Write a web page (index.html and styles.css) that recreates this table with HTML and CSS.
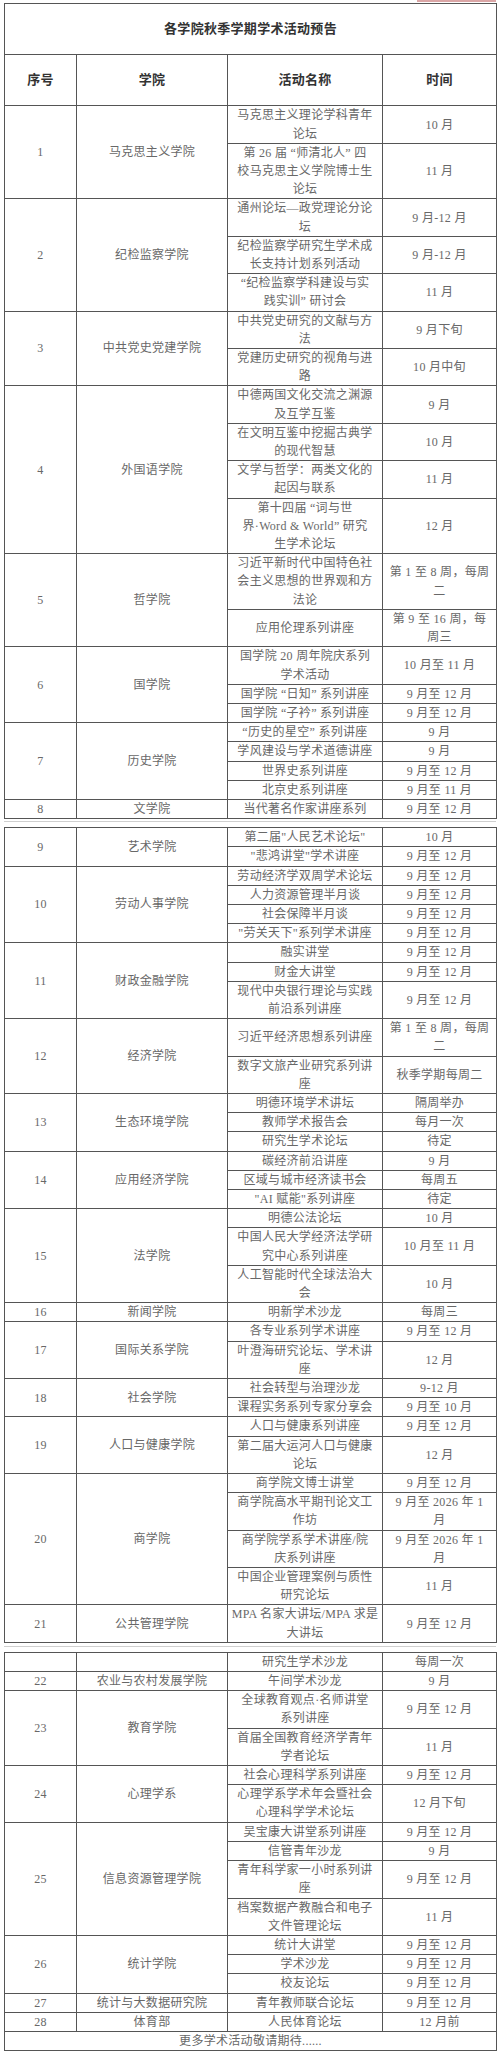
FILE: index.html
```html
<!DOCTYPE html>
<html lang="zh-CN">
<head>
<meta charset="utf-8">
<title>各学院秋季学期学术活动预告</title>
<link rel="stylesheet" href="styles.css">
</head>
<body>
<div class="page">
  <div class="topmark"></div>

  <table class="seg seg1">
    <colgroup><col class="c1"><col class="c2"><col class="c3"><col class="c4"></colgroup>
    <tr class="title"><td colspan="4">各学院秋季学期学术活动预告</td></tr>
    <tr class="head"><td>序号</td><td>学院</td><td>活动名称</td><td>时间</td></tr>

    <tr><td rowspan="2">1</td><td rowspan="2">马克思主义学院</td><td>马克思主义理论学科青年<br>论坛</td><td>10 月</td></tr>
    <tr><td>第 26 届 “师清北人” 四<br>校马克思主义学院博士生<br>论坛</td><td>11 月</td></tr>

    <tr><td rowspan="3">2</td><td rowspan="3">纪检监察学院</td><td>通州论坛—政党理论分论<br>坛</td><td>9 月-12 月</td></tr>
    <tr><td>纪检监察学研究生学术成<br>长支持计划系列活动</td><td>9 月-12 月</td></tr>
    <tr><td>“纪检监察学科建设与实<br>践实训” 研讨会</td><td>11 月</td></tr>

    <tr><td rowspan="2">3</td><td rowspan="2">中共党史党建学院</td><td>中共党史研究的文献与方<br>法</td><td>9 月下旬</td></tr>
    <tr><td>党建历史研究的视角与进<br>路</td><td>10 月中旬</td></tr>

    <tr><td rowspan="4">4</td><td rowspan="4">外国语学院</td><td>中德两国文化交流之渊源<br>及互学互鉴</td><td>9 月</td></tr>
    <tr><td>在文明互鉴中挖掘古典学<br>的现代智慧</td><td>10 月</td></tr>
    <tr><td>文学与哲学：两类文化的<br>起因与联系</td><td>11 月</td></tr>
    <tr><td>第十四届 “词与世<br>界·Word &amp; World” 研究<br>生学术论坛</td><td>12 月</td></tr>

    <tr><td rowspan="2">5</td><td rowspan="2">哲学院</td><td>习近平新时代中国特色社<br>会主义思想的世界观和方<br>法论</td><td>第 1 至 8 周，每周<br>二</td></tr>
    <tr><td>应用伦理系列讲座</td><td>第 9 至 16 周，每<br>周三</td></tr>

    <tr><td rowspan="3">6</td><td rowspan="3">国学院</td><td>国学院 20 周年院庆系列<br>学术活动</td><td>10 月至 11 月</td></tr>
    <tr><td>国学院 “日知” 系列讲座</td><td>9 月至 12 月</td></tr>
    <tr><td>国学院 “子衿” 系列讲座</td><td>9 月至 12 月</td></tr>

    <tr><td rowspan="4">7</td><td rowspan="4">历史学院</td><td>“历史的星空” 系列讲座</td><td>9 月</td></tr>
    <tr><td>学风建设与学术道德讲座</td><td>9 月</td></tr>
    <tr><td>世界史系列讲座</td><td>9 月至 12 月</td></tr>
    <tr><td>北京史系列讲座</td><td>9 月至 11 月</td></tr>

    <tr><td>8</td><td>文学院</td><td>当代著名作家讲座系列</td><td>9 月至 12 月</td></tr>
  </table>

  <div class="gap"><div class="gap-line"></div></div>

  <table class="seg seg2">
    <colgroup><col class="c1"><col class="c2"><col class="c3"><col class="c4"></colgroup>
    <tr><td rowspan="2">9</td><td rowspan="2">艺术学院</td><td>第二届"人民艺术论坛"</td><td>10 月</td></tr>
    <tr><td>"悲鸿讲堂"学术讲座</td><td>9 月至 12 月</td></tr>

    <tr><td rowspan="4">10</td><td rowspan="4">劳动人事学院</td><td>劳动经济学双周学术论坛</td><td>9 月至 12 月</td></tr>
    <tr><td>人力资源管理半月谈</td><td>9 月至 12 月</td></tr>
    <tr><td>社会保障半月谈</td><td>9 月至 12 月</td></tr>
    <tr><td>"劳关天下"系列学术讲座</td><td>9 月至 12 月</td></tr>

    <tr><td rowspan="3">11</td><td rowspan="3">财政金融学院</td><td>融实讲堂</td><td>9 月至 12 月</td></tr>
    <tr><td>财金大讲堂</td><td>9 月至 12 月</td></tr>
    <tr><td>现代中央银行理论与实践<br>前沿系列讲座</td><td>9 月至 12 月</td></tr>

    <tr><td rowspan="2">12</td><td rowspan="2">经济学院</td><td>习近平经济思想系列讲座</td><td>第 1 至 8 周，每周<br>二</td></tr>
    <tr><td>数字文旅产业研究系列讲<br>座</td><td>秋季学期每周二</td></tr>

    <tr><td rowspan="3">13</td><td rowspan="3">生态环境学院</td><td>明德环境学术讲坛</td><td>隔周举办</td></tr>
    <tr><td>教师学术报告会</td><td>每月一次</td></tr>
    <tr><td>研究生学术论坛</td><td>待定</td></tr>

    <tr><td rowspan="3">14</td><td rowspan="3">应用经济学院</td><td>碳经济前沿讲座</td><td>9 月</td></tr>
    <tr><td>区域与城市经济读书会</td><td>每周五</td></tr>
    <tr><td>"AI 赋能"系列讲座</td><td>待定</td></tr>

    <tr><td rowspan="3">15</td><td rowspan="3">法学院</td><td>明德公法论坛</td><td>10 月</td></tr>
    <tr><td>中国人民大学经济法学研<br>究中心系列讲座</td><td>10 月至 11 月</td></tr>
    <tr><td>人工智能时代全球法治大<br>会</td><td>10 月</td></tr>

    <tr><td>16</td><td>新闻学院</td><td>明新学术沙龙</td><td>每周三</td></tr>

    <tr><td rowspan="2">17</td><td rowspan="2">国际关系学院</td><td>各专业系列学术讲座</td><td>9 月至 12 月</td></tr>
    <tr><td>叶澄海研究论坛、学术讲<br>座</td><td>12 月</td></tr>

    <tr><td rowspan="2">18</td><td rowspan="2">社会学院</td><td>社会转型与治理沙龙</td><td>9-12 月</td></tr>
    <tr><td>课程实务系列专家分享会</td><td>9 月至 10 月</td></tr>

    <tr><td rowspan="2">19</td><td rowspan="2">人口与健康学院</td><td>人口与健康系列讲座</td><td>9 月至 12 月</td></tr>
    <tr><td>第二届大运河人口与健康<br>论坛</td><td>12 月</td></tr>

    <tr><td rowspan="4">20</td><td rowspan="4">商学院</td><td>商学院文博士讲堂</td><td>9 月至 12 月</td></tr>
    <tr><td>商学院高水平期刊论文工<br>作坊</td><td>9 月至 2026 年 1<br>月</td></tr>
    <tr><td>商学院学系学术讲座/院<br>庆系列讲座</td><td>9 月至 2026 年 1<br>月</td></tr>
    <tr><td>中国企业管理案例与质性<br>研究论坛</td><td>11 月</td></tr>

    <tr><td>21</td><td>公共管理学院</td><td>MPA 名家大讲坛/MPA 求是<br>大讲坛</td><td>9 月至 12 月</td></tr>
  </table>

  <div class="gap gap2"><div class="gap-line"></div></div>

  <table class="seg seg3">
    <colgroup><col class="c1"><col class="c2"><col class="c3"><col class="c4"></colgroup>
    <tr><td></td><td></td><td>研究生学术沙龙</td><td>每周一次</td></tr>
    <tr><td>22</td><td>农业与农村发展学院</td><td>午间学术沙龙</td><td>9 月</td></tr>

    <tr><td rowspan="2">23</td><td rowspan="2">教育学院</td><td>全球教育观点·名师讲堂<br>系列讲座</td><td>9 月至 12 月</td></tr>
    <tr><td>首届全国教育经济学青年<br>学者论坛</td><td>11 月</td></tr>

    <tr><td rowspan="2">24</td><td rowspan="2">心理学系</td><td>社会心理科学系列讲座</td><td>9 月至 12 月</td></tr>
    <tr><td>心理学系学术年会暨社会<br>心理科学学术论坛</td><td>12 月下旬</td></tr>

    <tr><td rowspan="4">25</td><td rowspan="4">信息资源管理学院</td><td>吴宝康大讲堂系列讲座</td><td>9 月至 12 月</td></tr>
    <tr><td>信管青年沙龙</td><td>9 月</td></tr>
    <tr><td>青年科学家一小时系列讲<br>座</td><td>9 月至 12 月</td></tr>
    <tr><td>档案数据产教融合和电子<br>文件管理论坛</td><td>11 月</td></tr>

    <tr><td rowspan="3">26</td><td rowspan="3">统计学院</td><td>统计大讲堂</td><td>9 月至 12 月</td></tr>
    <tr><td>学术沙龙</td><td>9 月至 12 月</td></tr>
    <tr><td>校友论坛</td><td>9 月至 12 月</td></tr>

    <tr><td>27</td><td>统计与大数据研究院</td><td>青年教师联合论坛</td><td>9 月至 12 月</td></tr>
    <tr><td>28</td><td>体育部</td><td>人民体育论坛</td><td>12 月前</td></tr>
    <tr class="foot"><td colspan="4">更多学术活动敬请期待......</td></tr>
  </table>
</div>
</body>
</html>
```

FILE: styles.css
```css
html, body {
  margin: 0;
  padding: 0;
  background: #ffffff;
}

body {
  font-family: "Liberation Serif", "Noto Sans CJK SC", serif;
  color: #686868;
}

.page {
  padding: 0 4px;
}

.topmark {
  height: 2px;
  margin-left: 413px;
  background: #dba6a6;
}

.seg {
  width: 492px;
  border-collapse: collapse;
  table-layout: fixed;
  border: 1px solid #555555;
}

.seg1 {
  margin-top: 1px;
}

.c1 { width: 72px; }
.c2 { width: 151px; }
.c3 { width: 155px; }
.c4 { width: 114px; }

.seg td {
  border: 1px solid #555555;
  padding: 0;
  text-align: center;
  vertical-align: middle;
  font-size: 12px;
  letter-spacing: 0.3px;
  line-height: 18.2px;
  white-space: nowrap;
}

.seg .title td,
.seg .head td {
  font-weight: bold;
  font-size: 13px;
  color: #333333;
  padding: 16px 0;
}

.gap {
  height: 8px;
  box-sizing: border-box;
  padding-top: 2px;
}

.gap2 {
  height: 9px;
  padding-top: 3px;
}

.gap-line {
  height: 1px;
  background: #cfcfcf;
}
```
